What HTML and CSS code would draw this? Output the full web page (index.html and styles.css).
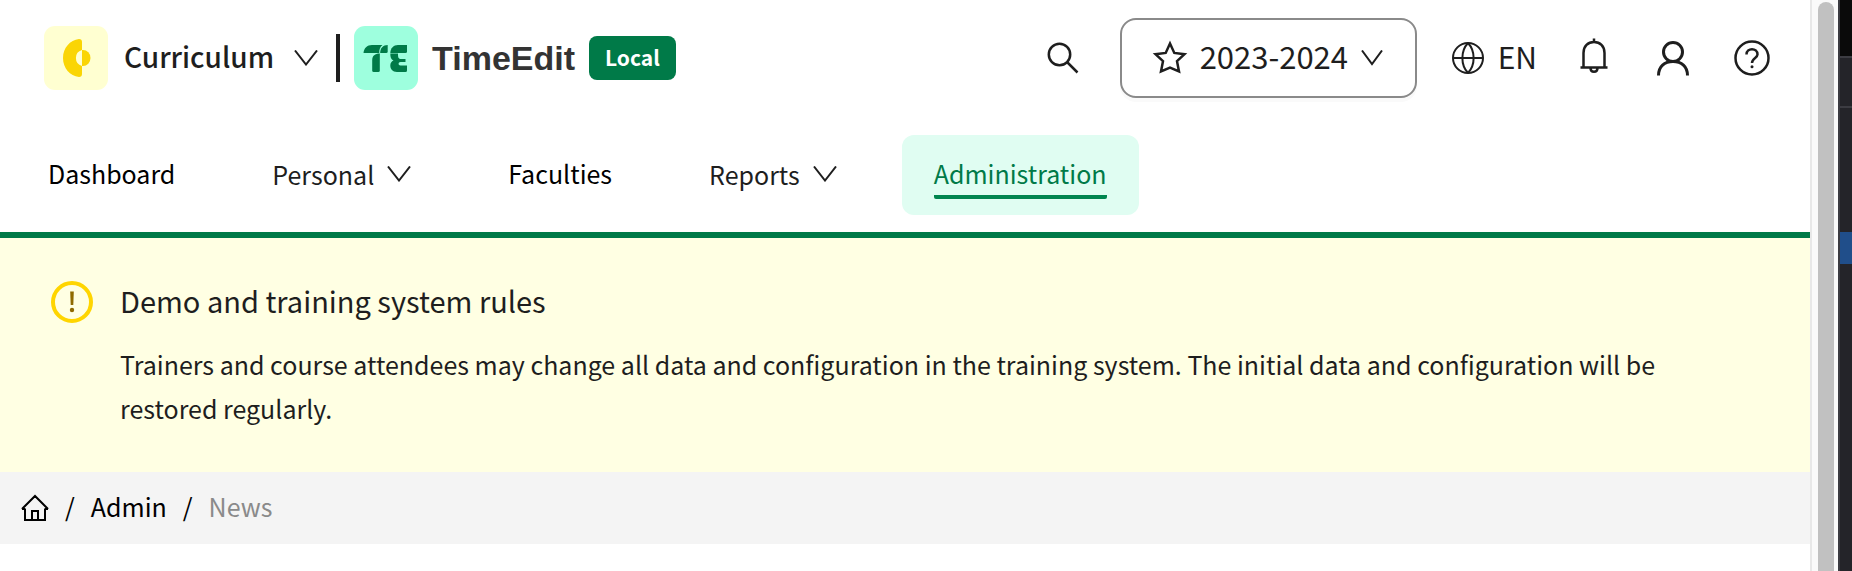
FILE: index.html
```html
<!DOCTYPE html>
<html lang="en">
  <head>
    <meta charset="UTF-8" />
    <meta name="viewport" content="width=device-width, initial-scale=1.0" />
    <title>News - TimeEdit Curriculum</title>
    <link rel="stylesheet" href="styles.css">
  </head>
  <body>
    <div class="page">
      <header class="header">
        <div class="topbar">
          <button type="button" class="product">
            <svg width="64" height="64" viewBox="0 0 64 64" aria-hidden="true">
              <rect width="64" height="64" rx="11" fill="#ffffd1" />
              <path d="M38 24V16Q38 13 35 13C26 14 19 22 19 32C19 42 26 50 35 51Q38 51 38 48V40A8.3 8.3 0 0 1 38 24Z" fill="#fad505" />
              <path d="M38 24H39A7.5 8 0 0 1 39 40H38Z" fill="#fad505" />
            </svg>
            <span class="product-name">Curriculum</span>
            <svg class="chevron" width="24" height="16" viewBox="0 0 24 16" aria-hidden="true">
              <path d="M1 0.5L12 14.5L23 0.5" />
            </svg>
          </button>
          <span class="divider"></span>
          <a href="#" class="brand">
            <svg width="64" height="64" viewBox="0 0 64 64" aria-hidden="true">
              <rect width="64" height="64" rx="11" fill="#9effde" />
              <g fill="#007a48">
                <path d="M9.500 27C10 22 13 19 18 19H28.500C26 21 25.200 23.500 25.200 27Z" />
                <path d="M26.200 27C26.200 22 29 19 33.700 19V25.500Q33.700 27 32.200 27Z" />
                <path d="M18.200 34C18.200 30 21 27.600 25.800 27.600V44.500Q25.800 46 24.300 46H19.700Q18.200 46 18.200 44.500Z" />
                <path d="M36.300 27C36.500 22 39.500 19 44 19H53V25.500Q53 27 51.500 27Z" />
                <path d="M36.300 27.500H44C44 30.500 44 33 47 33H51.500V36H46.500C44 36 44 39.500 46.500 39.500H53V44.500Q53 46 51.500 46H43C38.500 46 36.300 43 36.300 39.500C36.300 37 37.500 35.500 39.500 34.500C37 33.500 36.300 31 36.300 27.500Z" />
              </g>
            </svg>
            <span class="brand-name">TimeEdit</span>
          </a>
          <span class="env-badge">Local</span>

          <div class="tools">
            <button type="button" class="icon-button" aria-label="Search">
              <svg width="32" height="32" viewBox="0 0 32 32" aria-hidden="true">
                <circle cx="12.500" cy="12.500" r="10.700" />
                <path d="M20 20L30.500 30.500" />
              </svg>
            </button>
            <div class="year-picker">
              <svg width="36" height="36" viewBox="0 0 36 36" aria-hidden="true">
                <path d="M18 3.500L22.300 12.900L32.500 14.200L25 21.200L27 31.500L18 27.500L9 31.500L11 21.200L3.500 14.200L13.700 12.900Z" />
              </svg>
              <select class="year-select" aria-label="Academic year">
                <option>2023-2024</option>
              </select>
              <svg class="chevron" width="22" height="16" viewBox="0 0 22 16" aria-hidden="true">
                <path d="M1 0.500L11 14L21 0.500" />
              </svg>
            </div>
            <button type="button" class="language">
              <svg width="32" height="32" viewBox="0 0 32 32" aria-hidden="true">
                <circle cx="16" cy="16" r="15" />
                <path d="M16 1C8.500 9 8.500 23 16 31M16 1C23.500 9 23.500 23 16 31M1 16H31" />
              </svg>
              <span>EN</span>
            </button>
            <button type="button" class="icon-button" aria-label="Notifications">
              <svg width="28" height="40" viewBox="0 0 28 40" aria-hidden="true">
                <path d="M14 0.500V4M3.500 29V15C3.500 8 8 4 14 4S24.500 8 24.500 15V29M0.500 29.500H27.500M10.500 30C10.500 35 17.500 35 17.500 30" />
              </svg>
            </button>
            <button type="button" class="icon-button" aria-label="Profile">
              <svg class="heavy" width="32" height="36" viewBox="0 0 32 36" aria-hidden="true">
                <circle cx="16" cy="12" r="9.500" />
                <path d="M1.500 35.500C1.500 26.500 7.500 21.500 16 21.500S30.500 26.500 30.500 35.500" />
              </svg>
            </button>
            <button type="button" class="icon-button" aria-label="Help">
              <svg width="36" height="36" viewBox="0 0 36 36" aria-hidden="true">
                <circle cx="18" cy="18" r="16.500" />
                <path d="M12.500 14.500C12.500 7.500 23.500 7.500 23.500 14.500C23.500 18 18 18 18 23" />
                <circle class="dot" cx="18" cy="26.800" r="1.500" />
              </svg>
            </button>
          </div>
        </div>

        <nav class="nav">
          <a href="#" class="nav-item">Dashboard</a>
          <button type="button" class="nav-item">
            Personal
            <svg class="chevron" width="24" height="16" viewBox="0 0 24 16" aria-hidden="true">
              <path d="M1 0.500L12 14.500L23 0.500" />
            </svg>
          </button>
          <a href="#" class="nav-item">Faculties</a>
          <button type="button" class="nav-item">
            Reports
            <svg class="chevron" width="24" height="16" viewBox="0 0 24 16" aria-hidden="true">
              <path d="M1 0.500L12 14.500L23 0.500" />
            </svg>
          </button>
          <a href="#" class="nav-item active" aria-current="page"><span>Administration</span></a>
        </nav>
      </header>

      <section class="notice">
        <svg width="42" height="42" viewBox="0 0 42 42" aria-hidden="true">
          <circle cx="21" cy="21" r="19" fill="none" stroke="#ffd500" stroke-width="4" />
          <path d="M19.200 10.500H22.800L22.300 24H19.700Z" fill="#8f6a00" />
          <circle cx="21" cy="29" r="2.200" fill="#8f6a00" />
        </svg>
        <div class="notice-body">
          <h2>Demo and training system rules</h2>
          <p>
            Trainers and course attendees may change all data and configuration
            in the training system. The initial data and configuration will be
            restored regularly.
          </p>
        </div>
      </section>

      <nav class="breadcrumb" aria-label="Breadcrumb">
        <a href="#" aria-label="Home">
          <svg width="28" height="28" viewBox="0 0 28 28" aria-hidden="true">
            <path d="M4 14.500V26H24V14.500M1 15L14 2L27 15M1 15H4M24 15H27M11 26V17H17V26" />
          </svg>
        </a>
        <span>/</span>
        <a href="#" class="crumb">Admin</a>
        <span>/</span>
        <span class="current">News</span>
      </nav>
    </div>

    <div class="scrollbar"><div class="thumb"></div></div>

    <div class="side-panel">
      <div class="panel-top"></div>
      <div class="panel-tabs"></div>
      <div class="panel-rows"></div>
      <div class="panel-selected"></div>
    </div>
  </body>
</html>
```
FILE: styles.css
```css
* {
  box-sizing: border-box;
}
body {
  margin: 0;
  display: grid;
  grid-template-columns: 1fr 28px 14px;
  min-height: 100vh;
  font-family: "Noto Sans CJK SC", "Noto Sans", sans-serif;
  font-size: 25px;
  line-height: 44px;
  color: #1e1e1e;
  background: #ffffff;
}
button,
select {
  font: inherit;
  color: inherit;
  background: none;
  border: none;
  padding: 0;
  margin: 0;
  cursor: pointer;
}
a {
  color: #000000;
  text-decoration: none;
}
svg {
  display: block;
  flex-shrink: 0;
}
.page {
  min-width: 0;
}

/* header */
.header {
  border-bottom: 6px solid #007a48;
}
.topbar {
  display: flex;
  align-items: center;
  height: 116px;
  padding: 0 36px 0 44px;
}
.product {
  display: flex;
  align-items: center;
  gap: 16px;
}
.product-name {
  padding: 0 4px 4px 0;
  font-size: 28px;
  font-weight: 500;
}
.chevron {
  fill: none;
  stroke: #1e1e1e;
  stroke-width: 2;
}
.divider {
  width: 4px;
  height: 48px;
  margin: 0 14px 0 18px;
  background: #1e1e1e;
}
.brand {
  display: flex;
  align-items: center;
  gap: 14px;
  color: #333333;
}
.brand-name {
  font-family: "Liberation Sans", Arial, sans-serif;
  font-size: 34px;
  font-weight: 700;
}
.env-badge {
  margin-left: 14px;
  padding: 0 16px 2px;
  border-radius: 8px;
  background: #007a48;
  color: #ffffff;
  font-size: 21px;
  font-weight: 700;
  line-height: 42px;
}
.tools {
  display: flex;
  align-items: center;
  margin-left: auto;
  gap: 35px;
}
.tools svg {
  fill: none;
  stroke: #1e1e1e;
  stroke-width: 2;
}
.icon-button {
  display: flex;
  justify-content: center;
  width: 44px;
}
.tools .icon-button svg {
  stroke-width: 2.5;
}
.tools .icon-button .heavy {
  stroke-width: 3;
}
.tools .icon-button .dot {
  fill: #1e1e1e;
  stroke: none;
}
.year-picker {
  display: flex;
  align-items: center;
  gap: 12px;
  height: 80px;
  padding: 0 32px 0 30px;
  border: 2px solid #8a8a8a;
  border-radius: 16px;
  box-shadow: 0 4px 0 #fafafa;
  font-size: 31px;
}
.tools .year-picker svg:first-child {
  stroke-width: 2.5;
}
.year-select {
  appearance: none;
  padding-bottom: 4px;
}
.language {
  display: flex;
  align-items: center;
  gap: 14px;
  font-size: 30px;
}
.language span {
  padding-bottom: 4px;
}

/* main menu */
.nav {
  display: flex;
  gap: 33px;
  padding: 19px 16px 17px;
}
.nav-item {
  display: flex;
  align-items: center;
  gap: 13px;
  height: 80px;
  padding: 0 32px 4px;
  border-radius: 12px;
}
button.nav-item {
  padding-bottom: 2px;
}
.nav-item.active {
  padding-bottom: 0;
  background: #e0fdf2;
  color: #007a48;
}
.nav-item.active span {
  height: 48px;
  border-bottom: 4px solid #00854f;
  border-radius: 2px;
}

/* notice */
.notice {
  display: flex;
  align-items: flex-start;
  gap: 27px;
  padding: 40px 120px 42px 51px;
  background: #ffffe3;
}
.notice svg {
  margin-top: 3px;
}
.notice-body {
  flex: 1;
}
.notice h2 {
  margin: 0 0 20px;
  font-size: 29px;
  font-weight: 400;
  line-height: 44px;
}
.notice p {
  margin: 0;
}

/* breadcrumb */
.breadcrumb {
  display: flex;
  align-items: center;
  gap: 16px;
  height: 72px;
  padding: 0 21px;
  background: #f4f4f4;
  color: #000000;
}
.breadcrumb svg {
  fill: none;
  stroke: #000000;
  stroke-width: 2;
}
.breadcrumb span,
.breadcrumb .crumb {
  padding-bottom: 4px;
}
.breadcrumb .current {
  color: #8a8a8a;
}

/* right edge of the window */
.scrollbar {
  display: flex;
  padding: 2px 4px 0 6px;
  border-left: 2px solid #e8e8e8;
  background: #fafafa;
}
.thumb {
  flex: 1;
  border-radius: 8px 8px 0 0;
  background: #c1c1c1;
}
.side-panel {
  border-left: 2px solid #3c3c42;
  background: #242429;
}
.panel-top {
  height: 56px;
  background: #0a0a0a;
}
.panel-tabs {
  height: 52px;
  border-top: 2px solid #3c3c42;
  border-bottom: 2px solid #3c3c42;
}
.panel-rows {
  height: 124px;
}
.panel-selected {
  height: 32px;
  background: #204e8a;
}
```
